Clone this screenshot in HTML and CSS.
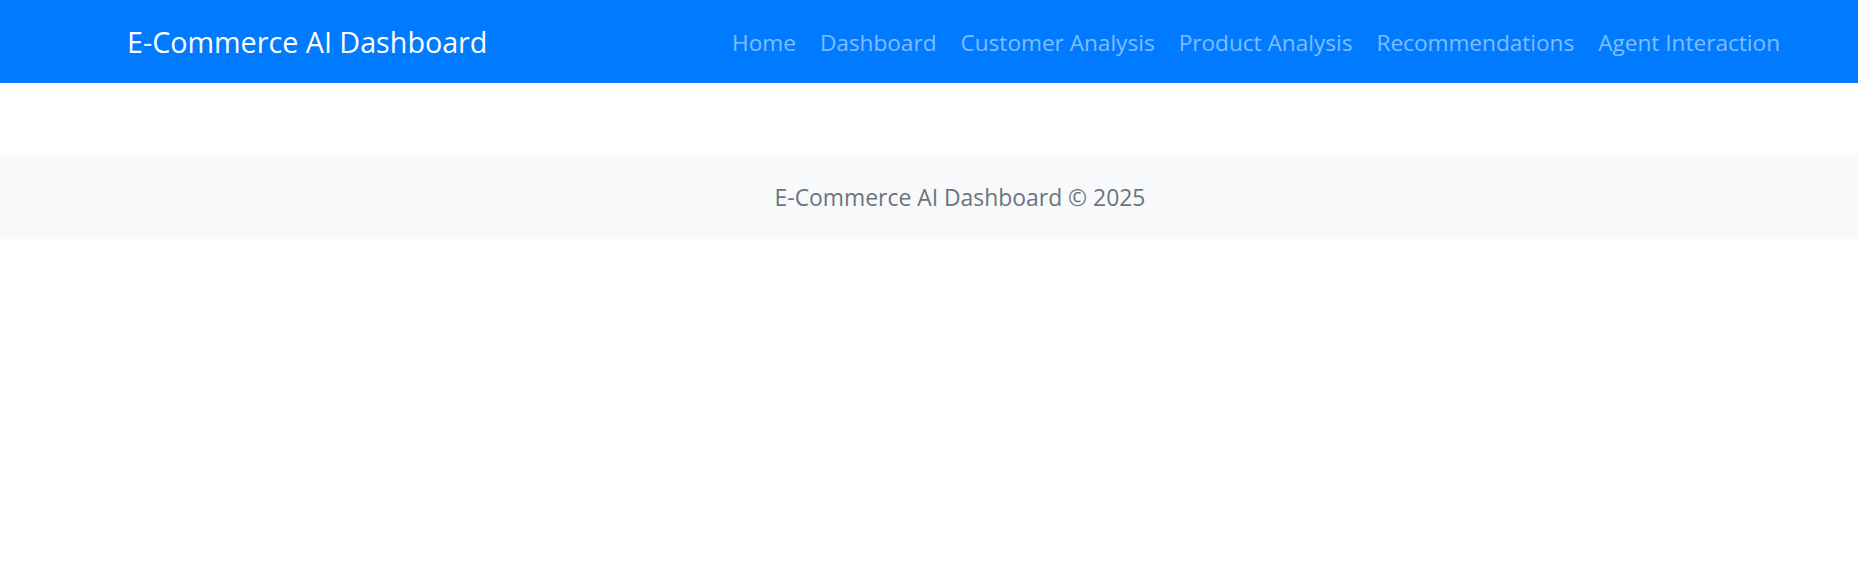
FILE: index.html
```html
<!DOCTYPE html>
<html lang="en">
<head>
<meta charset="utf-8">
<title>E-Commerce AI Dashboard</title>
<link rel="stylesheet" href="styles.css">
</head>
<body>
<div class="site">
  <nav class="navbar">
    <div class="container nav-inner">
      <a class="brand" href="#">E-Commerce AI Dashboard</a>
      <ul class="nav-links">
        <li><a href="#">Home</a></li>
        <li><a href="#">Dashboard</a></li>
        <li><a href="#">Customer Analysis</a></li>
        <li><a href="#">Product Analysis</a></li>
        <li><a href="#">Recommendations</a></li>
        <li><a href="#">Agent Interaction</a></li>
      </ul>
    </div>
  </nav>
  <main class="content"></main>
  <footer class="footer">
    <span>E-Commerce AI Dashboard © 2025</span>
  </footer>
</div>
</body>
</html>
```

FILE: styles.css
```css
html, body { margin: 0; padding: 0; overflow: hidden; }
body { font-family: "Open Sans", "Noto Sans", sans-serif; background: #fff; }
.site { width: 1920px; }
.navbar { background: #007bff; height: 83px; display: flex; align-items: center; }
.container { width: 1665px; margin-left: 127px; }
.nav-inner { display: flex; align-items: center; justify-content: space-between; }
.brand { color: #fff; text-decoration: none; font-size: 28.7px; }
.nav-links { list-style: none; margin: 0; padding: 2px 0 0; display: flex; }
.nav-links a { display: block; padding: 0 12px; color: rgba(255, 255, 255, 0.5); text-decoration: none; font-size: 22.6px; }
.content { height: 72px; }
.footer { background: #f8f9fa; height: 84px; padding-top: 1px; box-sizing: border-box; display: flex; align-items: center; justify-content: center; color: #6c757d; font-size: 22.9px; }
```
